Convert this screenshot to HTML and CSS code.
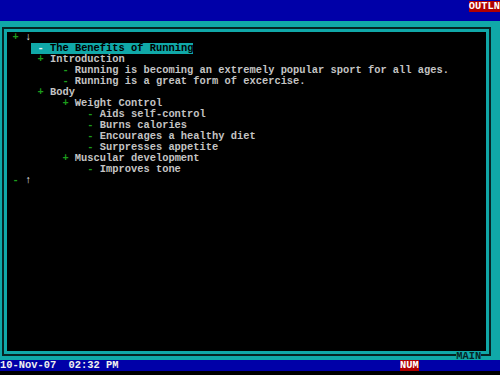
FILE: index.html
```html
<!DOCTYPE html>
<html>
<head>
<meta charset="utf-8">
<link rel="stylesheet" href="styles.css">
</head>
<body>
<div class="screen">
  <header class="topbar">
    <span class="tag">OUTLN</span>
  </header>
  <main class="frame">
    <div class="box">
      <div class="interior">
        <div class="row"><span class="bullet">+</span> <span class="arrow">↓</span></div>
        <div class="row">   <span class="sel"> <span class="selbullet">-</span> The Benefits of Running</span></div>
        <div class="row l1"><span class="bullet">+</span> Introduction</div>
        <div class="row l2"><span class="bullet">-</span> Running is becoming an extremely popular sport for all ages.</div>
        <div class="row l2"><span class="bullet">-</span> Running is a great form of excercise.</div>
        <div class="row l1"><span class="bullet">+</span> Body</div>
        <div class="row l2"><span class="bullet">+</span> Weight Control</div>
        <div class="row l3"><span class="bullet">-</span> Aids self-control</div>
        <div class="row l3"><span class="bullet">-</span> Burns calories</div>
        <div class="row l3"><span class="bullet">-</span> Encourages a healthy diet</div>
        <div class="row l3"><span class="bullet">-</span> Surpresses appetite</div>
        <div class="row l2"><span class="bullet">+</span> Muscular development</div>
        <div class="row l3"><span class="bullet">-</span> Improves tone</div>
        <div class="row"><span class="bullet">-</span> <span class="arrow">↑</span></div>
      </div>
      <span class="label">MAIN</span>
    </div>
  </main>
  <footer class="status">
    <span class="clock">10-Nov-07  02:32 PM</span>
    <span class="tag num">NUM</span>
  </footer>
</div>
</body>
</html>
```
FILE: styles.css
```css
html, body {
  margin: 0;
  padding: 0;
  background: #000;
}
.screen {
  width: 500px;
  height: 375px;
  display: flex;
  flex-direction: column;
  font-family: "Liberation Mono", "DejaVu Sans Mono", monospace;
  font-size: 10.4px;
  font-weight: bold;
  line-height: 11px;
  overflow: hidden;
}
.topbar {
  height: 21px;
  flex: none;
  background: #0000a8;
  display: flex;
  justify-content: flex-end;
  align-items: flex-start;
  padding-top: 1px;
  box-sizing: border-box;
}
.tag {
  background: #b00000;
  color: #fff;
  white-space: pre;
  line-height: 11px;
}
.frame {
  height: 339px;
  flex: none;
  box-sizing: border-box;
  background: #10a8a8;
  padding: 6px 9px 4px 2px;
  display: flex;
}
.box {
  flex: 1;
  position: relative;
  border: 2px solid #062424;
  padding: 3px;
  display: flex;
}
.interior {
  flex: 1;
  background: #000;
  padding-left: 5.5px;
  color: #c4c4c4;
}
.row {
  height: 11px;
  white-space: pre;
}
.l1 { padding-left: 4ch; }
.l2 { padding-left: 8ch; }
.l3 { padding-left: 12ch; }
.bullet {
  color: #1c9c1c;
}
.arrow {
  color: #e8e8e8;
}
.sel {
  background: #10a8a8;
  color: #000;
  display: inline-block;
  height: 11px;
}
.selbullet {
  color: #e8f8f8;
}
.label {
  position: absolute;
  right: 7.75px;
  bottom: -7px;
  line-height: 10px;
  background: #10a8a8;
  color: #062424;
}
.status {
  height: 11px;
  flex: none;
  background: #0000a8;
  color: #f0f0f0;
  position: relative;
}
.clock {
  white-space: pre;
  line-height: 11px;
}
.num {
  position: absolute;
  left: 400px;
  top: 0;
}
```
